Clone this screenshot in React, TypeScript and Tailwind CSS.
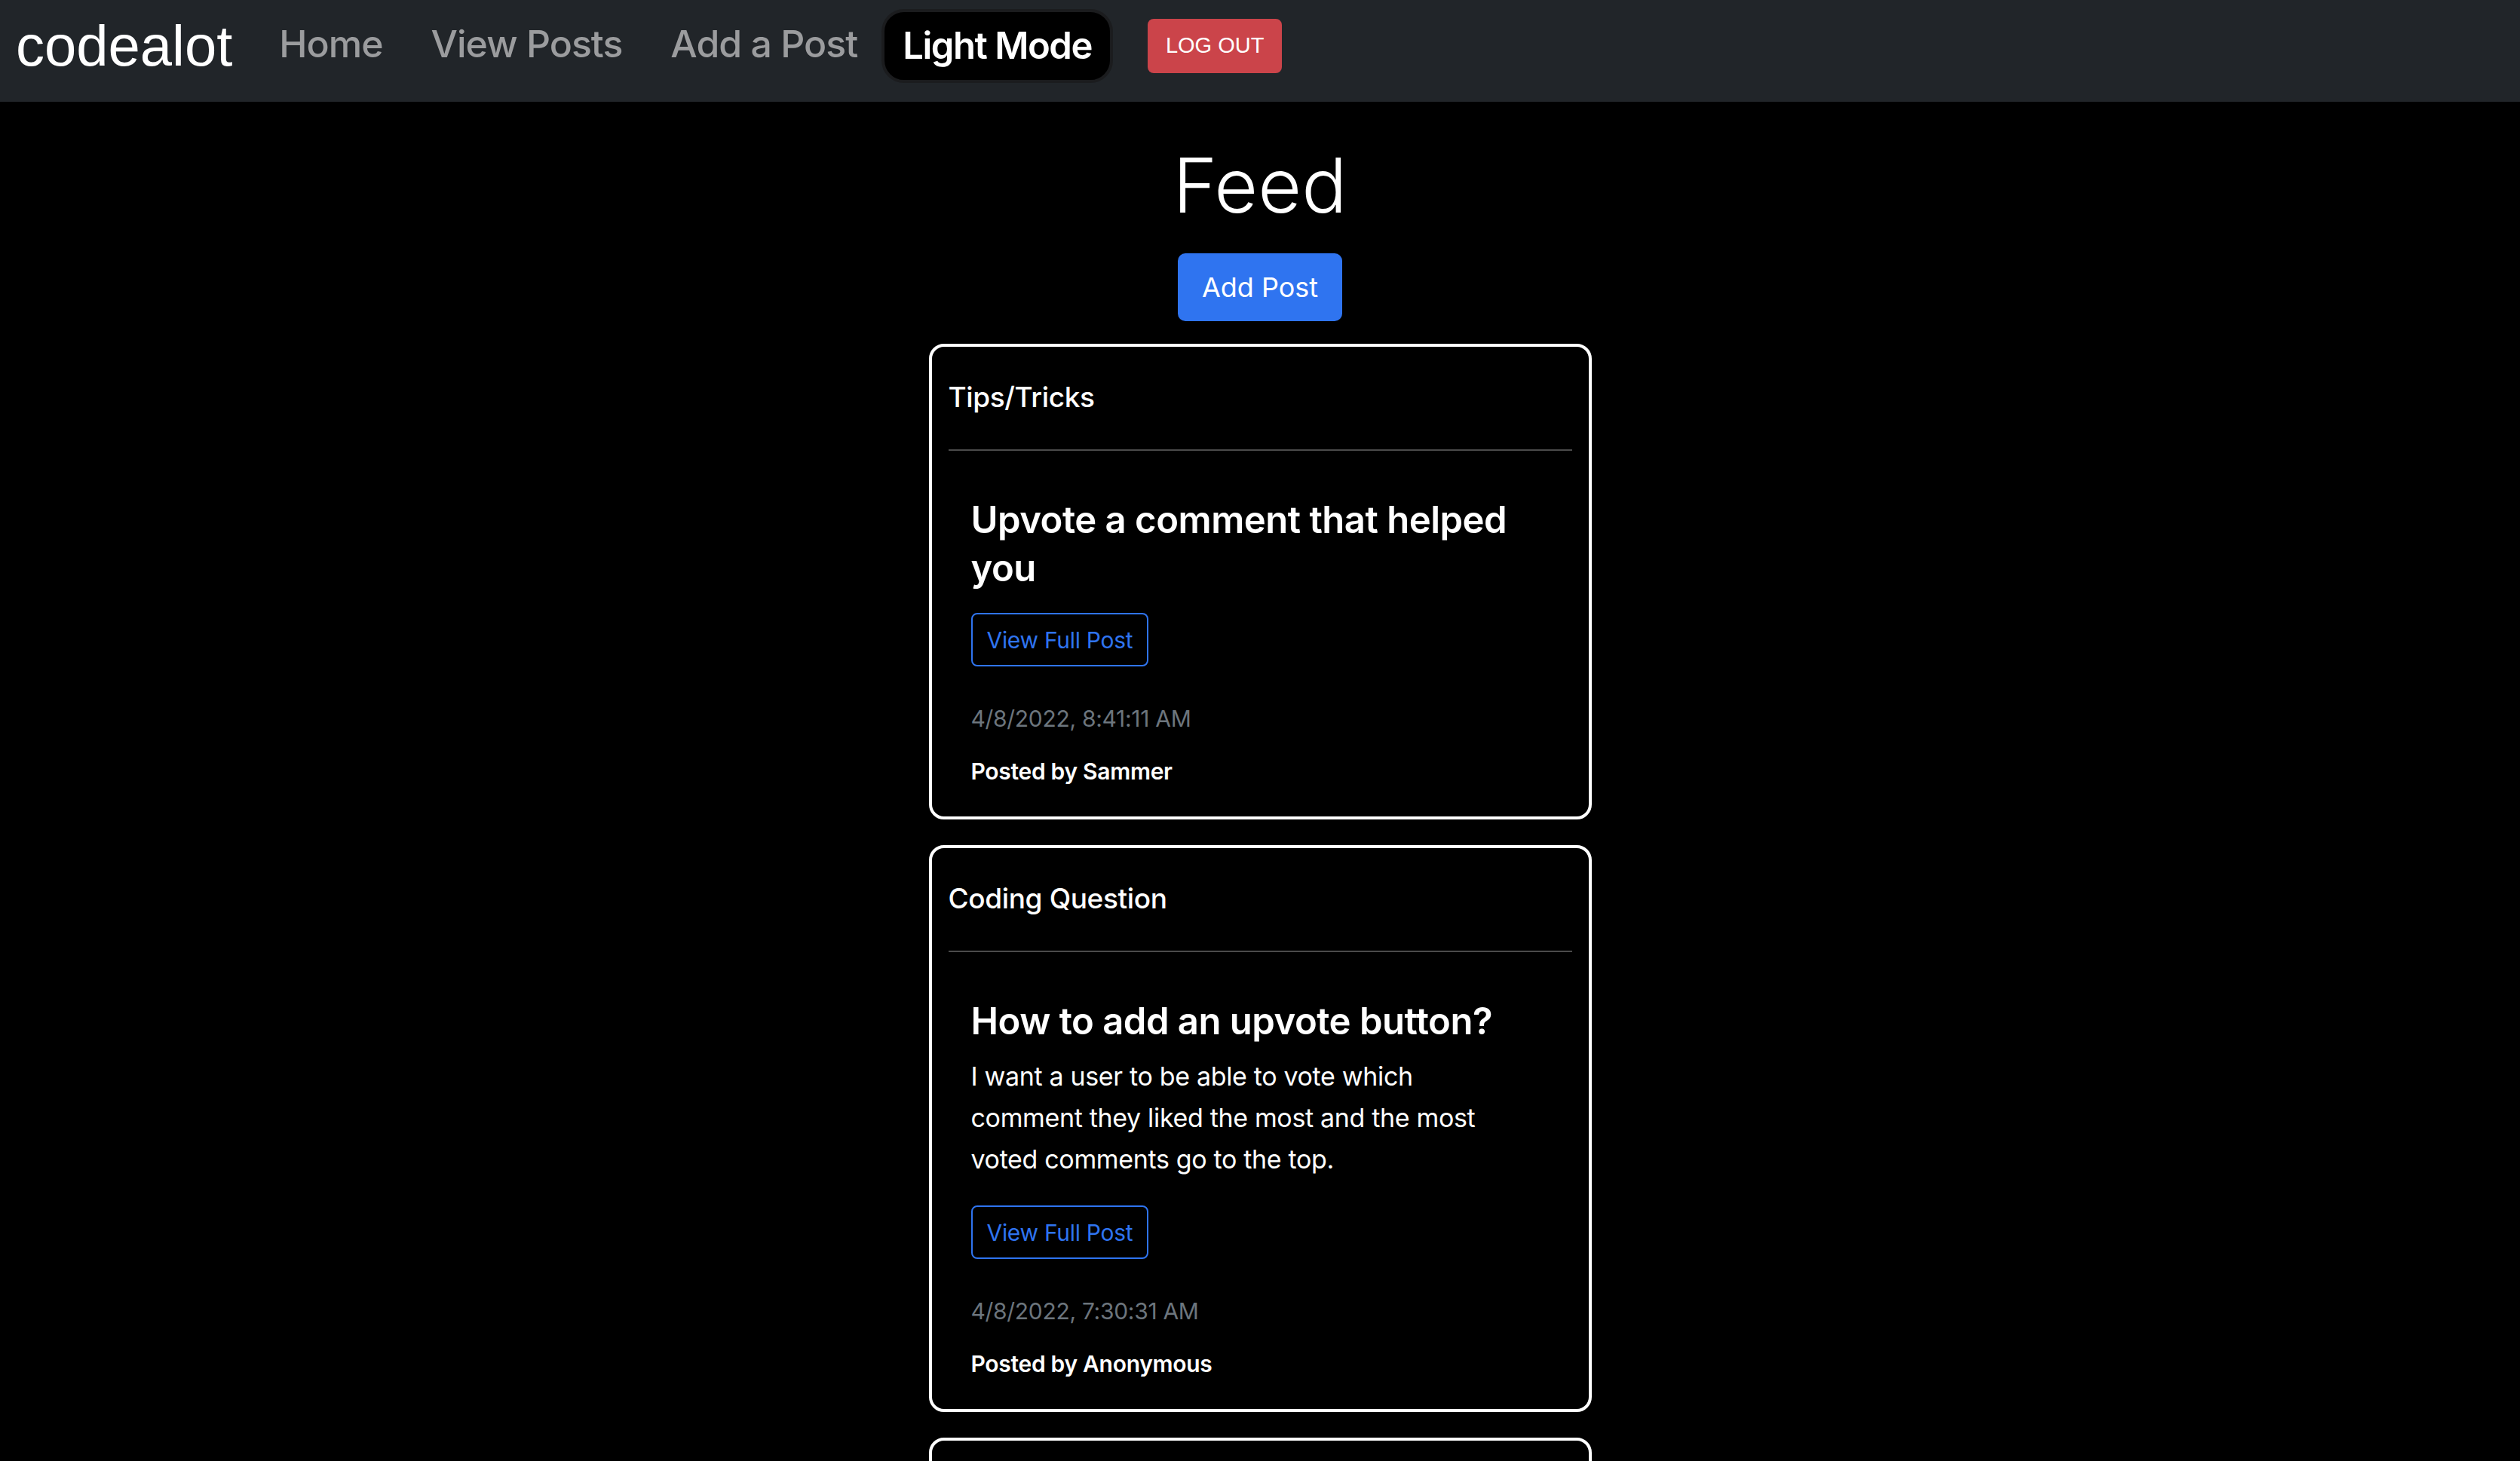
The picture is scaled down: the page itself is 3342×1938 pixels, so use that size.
const posts = [
  {
    category: "Tips/Tricks",
    title: "Upvote a comment that helped you",
    body: "",
    date: "4/8/2022, 8:41:11 AM",
    author: "Sammer",
  },
  {
    category: "Coding Question",
    title: "How to add an upvote button?",
    body: "I want a user to be able to vote which comment they liked the most and the most voted comments go to the top.",
    date: "4/8/2022, 7:30:31 AM",
    author: "Anonymous",
  },
  {
    category: "General",
    title: "Welcome to codealot",
    body: "Share your questions, tips and tricks with the community.",
    date: "4/7/2022, 9:12:45 PM",
    author: "Sammer",
  },
];

type Post = (typeof posts)[number];

function Navbar() {
  return (
    <nav className="bg-[#212529] pb-[13px]">
      <div className="flex items-center h-[122px] pl-[21px]">
        <a className="text-white text-[76px] leading-[76px] font-['Liberation_Sans',Arial,sans-serif]">
          codealot
        </a>
        <a className="ml-[62px] pb-[6px] text-[#9b9c9e] text-[50px] leading-[60px] font-medium tracking-[-0.02em]">
          Home
        </a>
        <a className="ml-[64px] pb-[6px] text-[#9b9c9e] text-[50px] leading-[60px] font-medium tracking-[-0.02em]">
          View Posts
        </a>
        <a className="ml-[64px] pb-[6px] text-[#9b9c9e] text-[50px] leading-[60px] font-medium tracking-[-0.02em]">
          Add a Post
        </a>
        <button className="ml-[32px] h-[98px] px-[24px] bg-black border-4 border-[#1b1c1e] rounded-[30px] text-white text-[49px] leading-[60px] font-semibold tracking-[-0.03em]">
          Light Mode
        </button>
        <button className="ml-[46px] h-[72px] px-[24px] bg-[#cb444a] rounded-[8px] text-white text-[29px] font-['Liberation_Sans',Arial,sans-serif]">
          LOG OUT
        </button>
      </div>
    </nav>
  );
}

function PostCard({ post }: { post: Post }) {
  return (
    <div className="w-[879px] mx-auto border-4 border-white rounded-[20px] bg-black">
      {/* card header */}
      <div className="mx-[22px] pt-[39px] pb-[42px] border-b-2 border-[#4b4b4b]">
        <h3 className="text-white text-[37px] leading-[55px] font-medium tracking-[-0.01em]">
          {post.category}
        </h3>
      </div>

      {/* card body */}
      <div className="pl-[52px] pr-[89px] pt-[60px] pb-[37px]">
        <h5 className="text-white text-[49px] leading-[64px] font-semibold tracking-[-0.01em] pb-[13px]">
          {post.title}
        </h5>
        {post.body && (
          <p className="text-white text-[34px] leading-[55px] pb-[20px] tracking-[-0.01em]">
            {post.body}
          </p>
        )}
        <div className="pt-[14px]">
          <button className="h-[71px] px-[19px] border-2 border-[#2f74f0] rounded-[8px] text-[#2f74f0] text-[30px] leading-[40px] tracking-[-0.01em]">
            View Full Post
          </button>
        </div>
        <p className="mt-[47px] text-[#6c757d] text-[30px] leading-[45px] tracking-[-0.01em]">
          {post.date}
        </p>
        <p className="mt-[25px] text-white text-[30px] leading-[45px] font-semibold tracking-[-0.01em]">
          Posted by {post.author}
        </p>
      </div>
    </div>
  );
}

export default function App() {
  return (
    <div className="min-h-screen bg-black font-['Inter','Noto_Sans',sans-serif]">
      <Navbar />
      <main className="flex flex-col items-center pb-20">
        <h1 className="mt-[49px] text-white text-[100px] leading-[124px] font-light">
          Feed
        </h1>
        <button className="mt-[28px] h-[90px] px-[32px] bg-[#2f74f0] rounded-[10px] text-white text-[36px] leading-[54px]">
          Add Post
        </button>
        <div className="mt-[30px] w-full flex flex-col gap-[34px]">
          {posts.map((p) => (
            <PostCard key={p.title} post={p} />
          ))}
        </div>
      </main>
    </div>
  );
}
